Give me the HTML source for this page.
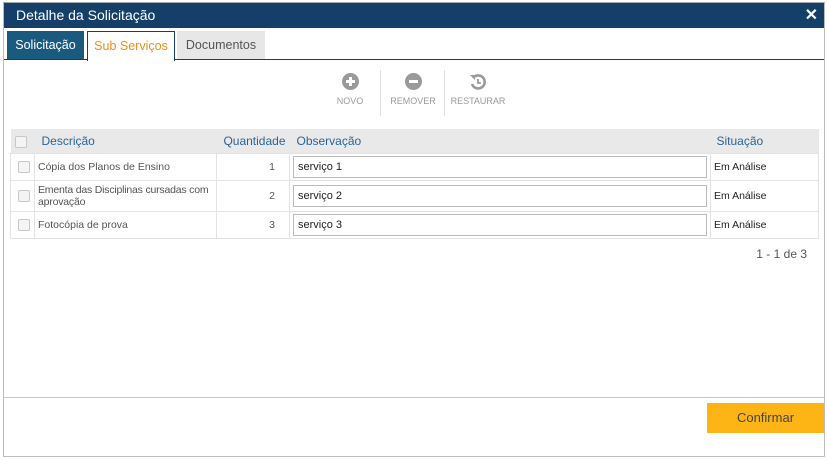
<!DOCTYPE html>
<html><head><meta charset="utf-8"><style>
*{box-sizing:border-box;margin:0;padding:0}
body{width:827px;height:460px;background:#fff;font-family:"Liberation Sans",sans-serif;position:relative;overflow:hidden}
.frame{position:absolute;left:3px;top:2px;width:822px;height:455px;border:1px solid #bdbdbd;border-top:2px solid #a9a9a9}
.title{position:absolute;left:4px;top:3px;width:820px;height:25px;background:#143f69;color:#fff;font-size:14px;line-height:25px;padding-left:12px}
.x{position:absolute;right:6px;top:0;font-weight:bold;font-size:16px}
.tab{position:absolute;top:31px;height:29px;font-size:12.5px;line-height:29px;text-align:center}
.line{position:absolute;left:4px;top:59px;width:820px;height:1px;background:#143f69}
.tb{position:absolute;font-size:9px;color:#9a9a9a;text-align:center}
.ic{width:17px;height:17px;border-radius:50%;background:#9a9a9a;margin:0 auto 6px;position:relative}
.sep{position:absolute;top:70px;width:1px;height:46px;background:#e0e0e0}
table{position:absolute;left:10px;top:129px;width:809px;border-collapse:collapse;font-size:10.5px;color:#555}
th{background:#e9e9e9;color:#2a6496;font-weight:normal;text-align:left;height:24px;font-size:12px}
td{border:1px solid #e3e3e3;padding:0 3px}
.cb{display:inline-block;width:12px;height:12px;border:1px solid #c8c8c8;border-radius:2px;background:#f4f4f4;margin-left:4px;vertical-align:middle}
.inp{border:1px solid #bbb;height:22px;line-height:20px;color:#222;padding-left:4px;font-size:11px}
</style></head><body>
<div class="frame"></div>
<div class="title">Detalhe da Solicitação<span class="x">✕</span></div>
<div class="tab" style="left:7px;width:77px;background:#1a5a7e;color:#fff">Solicitação</div>
<div class="tab" style="left:87px;width:88px;border:1px solid #143f69;border-bottom:none;background:#fff;color:#f28c1a;height:30px;z-index:2">Sub Serviços</div>
<div class="tab" style="left:177px;width:88px;background:#e7e7e7;color:#555">Documentos</div>
<div class="line"></div>
<div class="tb" style="left:330px;top:73px;width:40px"><div class="ic"><span style="position:absolute;left:4px;top:7px;width:9px;height:3px;background:#fff"></span><span style="position:absolute;left:7px;top:4px;width:3px;height:9px;background:#fff"></span></div>NOVO</div>
<div class="sep" style="left:380px"></div>
<div class="tb" style="left:390px;top:73px;width:46px"><div class="ic"><span style="position:absolute;left:4px;top:7px;width:9px;height:3px;background:#fff"></span></div>REMOVER</div>
<div class="sep" style="left:444px"></div>
<div class="tb" style="left:450px;top:73px;width:56px"><svg width="18" height="18" viewBox="0 0 18 18" style="display:block;margin:0 auto 5px"><path d="M4 5 A6.5 6.5 0 1 1 3 11" fill="none" stroke="#9a9a9a" stroke-width="2.6"/><path d="M1 2 L6 2 L6 7Z" fill="#9a9a9a"/><path d="M9 6 V10 H12" fill="none" stroke="#9a9a9a" stroke-width="1.8"/></svg>RESTAURAR</div>
<table>
<tr><th style="width:24px"><span class="cb"></span></th><th style="width:182px;padding-left:7px">Descrição</th><th style="width:73px;text-align:right;padding-right:4px">Quantidade</th><th style="width:421px;padding-left:7px">Observação</th><th style="padding-left:6px">Situação</th></tr>
<tr style="height:27px"><td><span class="cb"></span></td><td>Cópia dos Planos de Ensino</td><td style="text-align:right;padding-right:14px">1</td><td><div class="inp">serviço 1</div></td><td style="color:#222">Em Análise</td></tr>
<tr style="height:31px"><td><span class="cb"></span></td><td style="letter-spacing:-0.2px">Ementa das Disciplinas cursadas com aprovação</td><td style="text-align:right;padding-right:14px">2</td><td><div class="inp">serviço 2</div></td><td style="color:#222">Em Análise</td></tr>
<tr style="height:27px"><td><span class="cb"></span></td><td>Fotocópia de prova</td><td style="text-align:right;padding-right:14px">3</td><td><div class="inp">serviço 3</div></td><td style="color:#222">Em Análise</td></tr>
</table>
<div style="position:absolute;right:20px;top:247px;font-size:12px;color:#555">1 - 1 de 3</div>
<div style="position:absolute;left:4px;top:397px;width:820px;height:1px;background:#c8c8c8"></div>
<div style="position:absolute;left:707px;top:403px;width:117px;height:30px;background:#fdb515;color:#444;font-size:13px;line-height:30px;text-align:center">Confirmar</div>
</body></html>
